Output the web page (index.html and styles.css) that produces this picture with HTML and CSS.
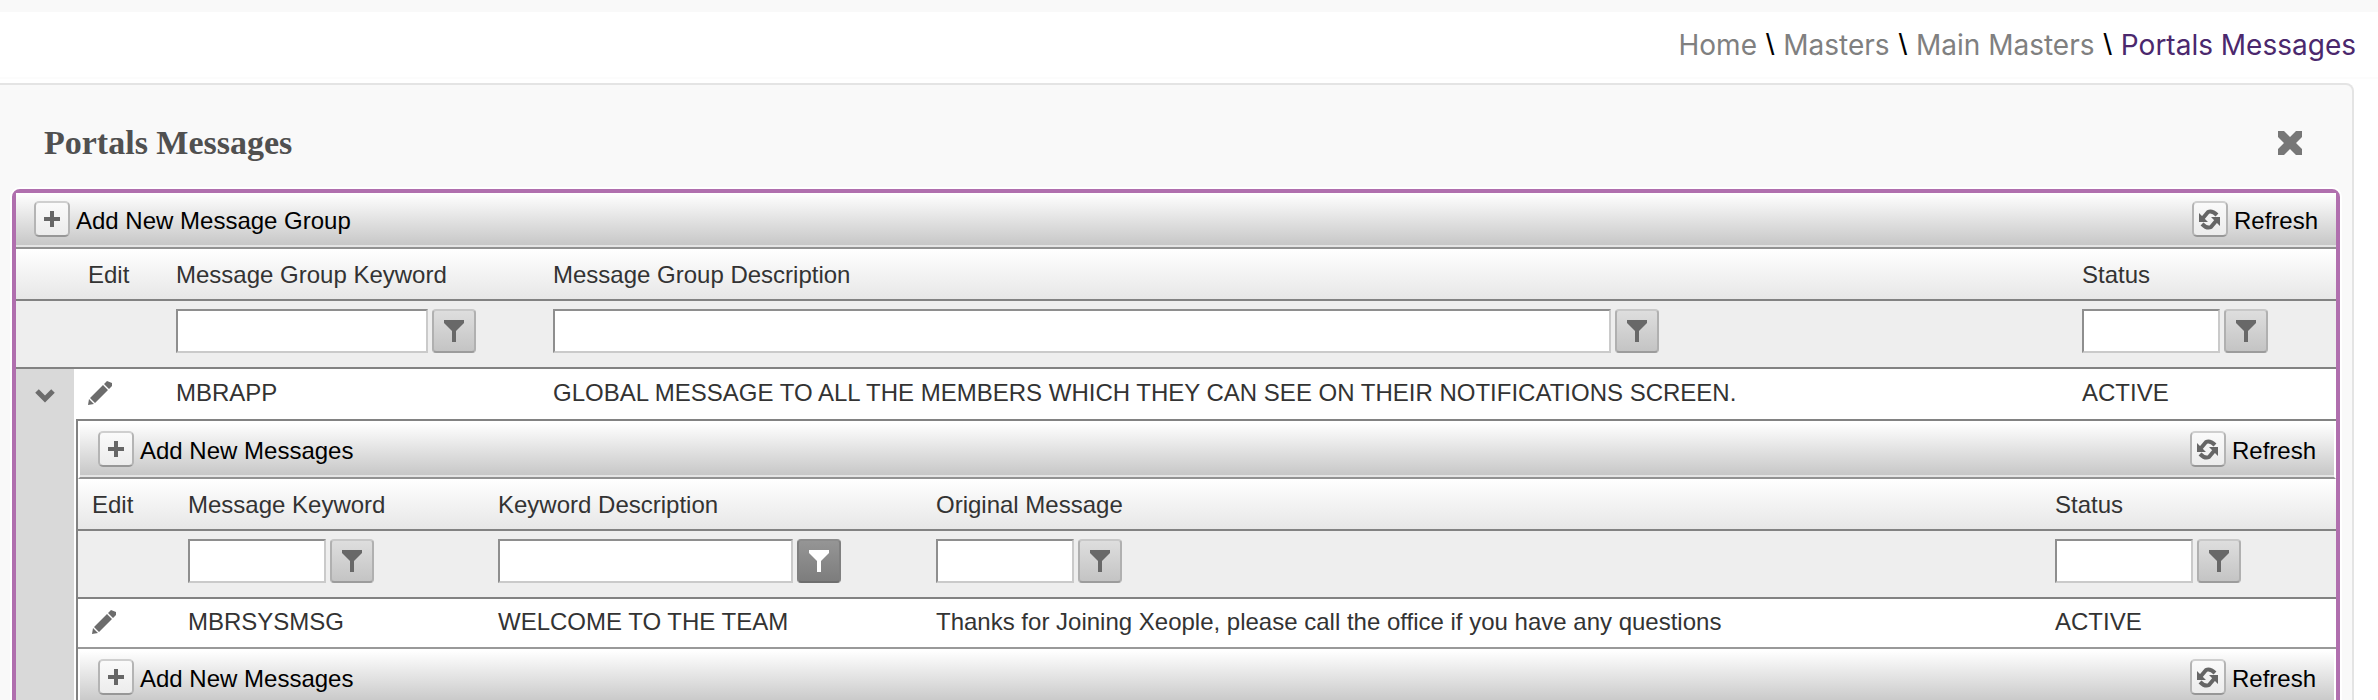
FILE: index.html
```html
<!DOCTYPE html>
<html lang="en">
<head>
  <meta charset="UTF-8">
  <meta name="viewport" content="width=device-width, initial-scale=1.0">
  <title>Portals Messages</title>
  <link rel="stylesheet" href="styles.css">
</head>
<body>
  <!-- shared icons -->
  <svg class="sprite" width="0" height="0" aria-hidden="true">
    <symbol id="plus" viewBox="0 0 16 16"><path d="M6 0h4v6h6v4h-6v6H6v-6H0V6h6z"/></symbol>
    <symbol id="refresh" viewBox="0 0 21 21">
      <path d="M0 4v9h9zM21 17V8h-9z"/>
      <path d="M4 9L9 3q4-2 9 3M17 12l-5 6q-4 2-9-3" fill="none" stroke="currentColor" stroke-width="4"/>
    </symbol>
    <symbol id="funnel" viewBox="0 0 20 22"><path d="M0 0h20v3l-8 8v11H8V11L0 3z"/></symbol>
    <symbol id="pencil" viewBox="0 0 24 24">
      <path d="M0 24l1-6 5 5zM2 17L15 4l5 5L7 22zM16 3l3-3 5 2v3l-3 3z"/>
    </symbol>
    <symbol id="chevron" viewBox="0 0 20 14"><path d="M2 2l8 8 8-8" fill="none" stroke="currentColor" stroke-width="5"/></symbol>
    <symbol id="cross" viewBox="0 0 24 24"><path d="M0 0h6l6 6 6-6h6v6l-6 6 6 6v6h-6l-6-6-6 6H0v-6l6-6-6-6z"/></symbol>
  </svg>

  <div class="topbar"></div>
  <nav class="breadcrumb" aria-label="Breadcrumb">
    <a href="#">Home</a><span>\</span>
    <a href="#">Masters</a><span>\</span>
    <a href="#">Main Masters</a><span>\</span>
    <a href="#" class="current">Portals Messages</a>
  </nav>

  <main class="panel">
    <header class="panel-head">
      <h1>Portals Messages</h1>
      <button type="button" class="plain close" aria-label="Close"><svg width="24" height="24"><use href="#cross"/></svg></button>
    </header>

    <div class="grid">
      <div class="toolbar">
        <button type="button" class="command"><i><svg width="16" height="16"><use href="#plus"/></svg></i>Add New Message Group</button>
        <button type="button" class="command"><i><svg width="21" height="21"><use href="#refresh"/></svg></i>Refresh</button>
      </div>
      <table>
        <colgroup>
          <col class="w-expand"><col class="w-edit"><col class="w-group"><col><col class="w-status">
        </colgroup>
        <thead>
          <tr class="titles">
            <th></th><th>Edit</th><th>Message Group Keyword</th><th>Message Group Description</th><th>Status</th>
          </tr>
          <tr class="filters">
            <td></td><td></td>
            <td><div class="filter"><input type="text" class="medium" aria-label="Filter group keyword"><button type="button" aria-label="Filter"><svg width="20" height="22"><use href="#funnel"/></svg></button></div></td>
            <td><div class="filter"><input type="text" class="wide" aria-label="Filter group description"><button type="button" aria-label="Filter"><svg width="20" height="22"><use href="#funnel"/></svg></button></div></td>
            <td><div class="filter"><input type="text" aria-label="Filter group status"><button type="button" aria-label="Filter"><svg width="20" height="22"><use href="#funnel"/></svg></button></div></td>
          </tr>
        </thead>
        <tbody>
          <tr class="item">
            <td class="expand" rowspan="2"><button type="button" class="plain" aria-label="Collapse"><svg width="20" height="14"><use href="#chevron"/></svg></button></td>
            <td><button type="button" class="plain" aria-label="Edit"><svg width="24" height="24"><use href="#pencil"/></svg></button></td>
            <td>MBRAPP</td>
            <td>GLOBAL MESSAGE TO ALL THE MEMBERS WHICH THEY CAN SEE ON THEIR NOTIFICATIONS SCREEN.</td>
            <td>ACTIVE</td>
          </tr>
          <tr>
            <td colspan="4" class="detail">
              <div class="subgrid">
                <div class="toolbar">
                  <button type="button" class="command"><i><svg width="16" height="16"><use href="#plus"/></svg></i>Add New Messages</button>
                  <button type="button" class="command"><i><svg width="21" height="21"><use href="#refresh"/></svg></i>Refresh</button>
                </div>
                <table>
                  <colgroup>
                    <col class="w-subedit"><col class="w-keyword"><col class="w-desc"><col><col class="w-substatus">
                  </colgroup>
                  <thead>
                    <tr class="titles">
                      <th>Edit</th><th>Message Keyword</th><th>Keyword Description</th><th>Original Message</th><th>Status</th>
                    </tr>
                    <tr class="filters">
                      <td></td>
                      <td><div class="filter"><input type="text" aria-label="Filter keyword"><button type="button" aria-label="Filter"><svg width="20" height="22"><use href="#funnel"/></svg></button></div></td>
                      <td><div class="filter"><input type="text" class="large" aria-label="Filter keyword description"><button type="button" class="active" aria-label="Filter"><svg width="20" height="22"><use href="#funnel"/></svg></button></div></td>
                      <td><div class="filter"><input type="text" aria-label="Filter original message"><button type="button" aria-label="Filter"><svg width="20" height="22"><use href="#funnel"/></svg></button></div></td>
                      <td><div class="filter"><input type="text" aria-label="Filter status"><button type="button" aria-label="Filter"><svg width="20" height="22"><use href="#funnel"/></svg></button></div></td>
                    </tr>
                  </thead>
                  <tbody>
                    <tr class="item">
                      <td><button type="button" class="plain" aria-label="Edit"><svg width="24" height="24"><use href="#pencil"/></svg></button></td>
                      <td>MBRSYSMSG</td>
                      <td>WELCOME TO THE TEAM</td>
                      <td>Thanks for Joining Xeople, please call the office if you have any questions</td>
                      <td>ACTIVE</td>
                    </tr>
                  </tbody>
                </table>
                <div class="toolbar">
                  <button type="button" class="command"><i><svg width="16" height="16"><use href="#plus"/></svg></i>Add New Messages</button>
                  <button type="button" class="command"><i><svg width="21" height="21"><use href="#refresh"/></svg></i>Refresh</button>
                </div>
              </div>
            </td>
          </tr>
        </tbody>
      </table>
    </div>
  </main>
</body>
</html>
```
FILE: styles.css
```css
* { box-sizing: border-box; }
body { margin: 0; height: 100vh; overflow: hidden; background: #fff; color: #333; font: 24px/28px "Liberation Sans", Arial, sans-serif; }
svg { display: block; fill: currentColor; }
button { font: inherit; cursor: pointer; }
.sprite { position: absolute; }

.topbar { height: 12px; background: #f9f9f9; }
.breadcrumb { display: flex; justify-content: flex-end; align-items: center; height: 67px; margin-bottom: 4px; padding: 0 22px; border-bottom: 2px solid #fcfcfc; font: 28px/36px Inter, sans-serif; }
.breadcrumb a { color: #808080; text-decoration: none; }
.breadcrumb .current { color: #4b286d; }
.breadcrumb span { padding: 0 9px; color: #000; font-family: "Liberation Sans", Arial, sans-serif; font-size: 30px; }

.panel { margin-right: 24px; background: #f9f9f9; border: 2px solid #e4e4e4; border-left: none; border-radius: 0 8px 0 0; }
.panel-head { display: flex; justify-content: space-between; align-items: center; padding: 38px 50px 26px 44px; }
h1 { margin: 0; color: #505050; font: bold 34px/40px "Liberation Serif", "Times New Roman", serif; }
.plain { display: block; padding: 0; border: none; background: none; color: #6c6c6c; }
.close { color: #777; }

.grid { margin: 0 12px; background: #fff; border: 4px solid #b06fae; border-radius: 8px; box-shadow: 0 0 0 2px #fff; }
.toolbar { display: flex; justify-content: space-between; padding: 8px 18px 6px; background: linear-gradient(#fff, #c5c5c5); border-bottom: 2px solid #929292; box-shadow: inset 0 -2px #e4e4e4; }
.command { display: flex; gap: 6px; padding: 0; border: none; background: none; color: #000; line-height: 40px; }
.command i { display: grid; place-items: center; width: 36px; height: 36px; background: linear-gradient(#fafafa, #ececec); border: 2px solid #b4b4b4; border-top-color: #cfcfcf; border-bottom-color: #979797; border-radius: 5px; color: #666; }

table { width: 100%; table-layout: fixed; border-spacing: 0; }
th, td { padding: 0 14px; text-align: left; font-weight: normal; }
.titles th { height: 52px; padding-top: 2px; background: linear-gradient(#fff, #e7e7e7); border-bottom: 2px solid #828282; }
.filters td { padding-top: 8px; padding-bottom: 14px; background: #eee; border-bottom: 2px solid #828282; }
.item td { height: 50px; padding-bottom: 2px; }
.w-expand { width: 58px; }
.w-edit { width: 88px; }
.w-group { width: 377px; }
.w-status { width: 268px; }
.w-subedit { width: 96px; }
.w-keyword { width: 310px; }
.w-desc { width: 438px; }
.w-substatus { width: 295px; }

.filter { display: flex; gap: 4px; }
.filter input { width: 138px; height: 44px; padding: 0 8px; background: #fff; border: 2px solid; border-color: #8e8e8e #cacaca #cacaca #8e8e8e; font: inherit; }
.filter .medium { width: 252px; }
.filter .large { width: 295px; }
.filter .wide { width: 70.5%; }
.filter button { display: grid; place-items: center; width: 44px; height: 44px; padding: 0; background: linear-gradient(#dedede, #c4c4c4); border: 2px solid #b0b0b0; border-top-color: #c8c8c8; border-bottom-color: #9c9c9c; border-radius: 4px; color: #686868; }
.filter .active { background: linear-gradient(#959595, #7d7d7d); border-color: #8c8c8c #7f7f7f #6e6e6e; color: #fff; }

.item .expand { padding: 20px 19px; vertical-align: top; background: #d9d9d9; }
.detail { padding: 0 0 0 2px; }
.subgrid { border-top: 2px solid #828282; border-left: 2px solid #828282; }
.subgrid .item td { border-bottom: 2px solid #999; }
.subgrid .toolbar { border-top: 2px solid #fff; border-left: 2px solid #fff; border-right: 2px solid #fff; }
```
